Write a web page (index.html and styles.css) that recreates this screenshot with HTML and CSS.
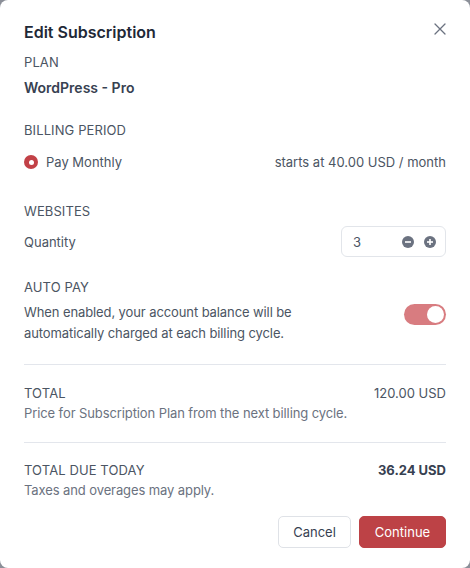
FILE: index.html
```html
<!DOCTYPE html>
<html>
<head>
<meta charset="utf-8">
<link rel="stylesheet" href="styles.css">
</head>
<body>
<div class="modal">
  <div class="header">
    <h1 class="title">Edit Subscription</h1>
    <button class="close" aria-label="Close">
      <svg width="12" height="12" viewBox="0 0 12 12"><path d="M1 1L11 11M11 1L1 11" stroke="#6b7280" stroke-width="1.3" fill="none" stroke-linecap="round"/></svg>
    </button>
  </div>

  <div class="label mt8">PLAN</div>
  <div class="plan">WordPress - Pro</div>

  <div class="label mt22">BILLING PERIOD</div>
  <div class="row mt12">
    <div class="radio-wrap"><span class="radio"></span><span class="text">Pay Monthly</span></div>
    <span class="text">starts at 40.00 USD / month</span>
  </div>

  <div class="label mt29">WEBSITES</div>
  <div class="row mt5">
    <span class="text">Quantity</span>
    <div class="qty">
      <span class="qty-val">3</span>
      <span class="qty-btns">
        <svg width="12" height="12" viewBox="0 0 12 12"><circle cx="6" cy="6" r="6" fill="#6b7280"/><rect x="3" y="5.2" width="6" height="1.6" fill="#fff"/></svg>
        <svg width="12" height="12" viewBox="0 0 12 12"><circle cx="6" cy="6" r="6" fill="#6b7280"/><rect x="3" y="5.2" width="6" height="1.6" fill="#fff"/><rect x="5.2" y="3" width="1.6" height="6" fill="#fff"/></svg>
      </span>
    </div>
  </div>

  <div class="label mt20">AUTO PAY</div>
  <div class="row top mt5">
    <p class="desc-dark">When enabled, your account balance will be automatically charged at each billing cycle.</p>
    <span class="toggle"><span class="knob"></span></span>
  </div>

  <hr class="divider">

  <div class="row">
    <span class="label">TOTAL</span>
    <span class="text">120.00 USD</span>
  </div>
  <div class="sub">Price for Subscription Plan from the next billing cycle.</div>

  <hr class="divider second">

  <div class="row">
    <span class="label">TOTAL DUE TODAY</span>
    <span class="text bold">36.24 USD</span>
  </div>
  <div class="sub">Taxes and overages may apply.</div>

  <div class="actions">
    <button class="btn cancel">Cancel</button>
    <button class="btn primary">Continue</button>
  </div>
</div>
</body>
</html>
```
FILE: styles.css
```css
* { box-sizing: border-box; }
html, body { margin: 0; padding: 0; }
body {
  background: #8b8f98;
  font-family: Inter, "Noto Sans", sans-serif;
  width: 470px;
  height: 568px;
  overflow: hidden;
}
.modal {
  background: #fff;
  width: 470px;
  height: 568px;
  border-radius: 8px;
  padding: 20px 24px 0 24px;
  display: flex;
  flex-direction: column;
}
.header {
  display: flex;
  justify-content: space-between;
  align-items: flex-start;
}
.title {
  margin: 0;
  font-size: 16px;
  line-height: 24px;
  font-weight: 600;
  color: #1f2937;
}
.close {
  background: none;
  border: 0;
  padding: 0;
  margin: 3px 0 0 0;
  width: 12px;
  height: 12px;
  display: flex;
}
.label {
  font-size: 13px;
  line-height: 20px;
  color: #4b5563;
  letter-spacing: 0.1px;
}
.mt5 { margin-top: 5px; }
.mt8 { margin-top: 8px; }
.mt12 { margin-top: 12px; }
.mt20 { margin-top: 20px; }
.mt22 { margin-top: 22px; }
.mt29 { margin-top: 29px; }
.plan {
  margin-top: 6px;
  font-size: 14px;
  line-height: 20px;
  font-weight: 600;
  color: #374151;
}
.row {
  display: flex;
  justify-content: space-between;
  align-items: center;
}
.row.top { align-items: flex-start; }
.text {
  font-size: 13px;
  line-height: 20px;
  color: #4b5563;
}
.bold { font-weight: 700; color: #374151; }
.radio-wrap {
  display: flex;
  align-items: center;
  gap: 8px;
}
.radio {
  width: 14px;
  height: 14px;
  border-radius: 50%;
  background: #c24147;
  position: relative;
}
.radio::after {
  content: "";
  position: absolute;
  left: 4.5px;
  top: 4.5px;
  width: 5px;
  height: 5px;
  border-radius: 50%;
  background: #fff;
}
.qty {
  width: 105px;
  height: 31px;
  border: 1px solid #e2e5ea;
  border-radius: 6px;
  display: flex;
  align-items: center;
  justify-content: space-between;
  padding: 0 9px 0 11px;
}
.qty-val {
  font-size: 13px;
  color: #4b5563;
}
.qty-btns {
  display: flex;
  gap: 10px;
}
.qty-btns svg { display: block; }
.desc-dark {
  margin: 0;
  width: 285px;
  font-size: 13px;
  line-height: 21px;
  color: #4b5563;
  letter-spacing: -0.1px;
}
.toggle {
  width: 42px;
  height: 21px;
  border-radius: 11px;
  background: #d87c80;
  margin-top: 2px;
  position: relative;
  display: block;
}
.knob {
  position: absolute;
  right: 2px;
  top: 2px;
  width: 17px;
  height: 17px;
  border-radius: 50%;
  background: #fff;
}
.divider {
  border: 0;
  border-top: 1px solid #e3e6ec;
  margin: 20px 0 18px 0;
  height: 0;
}
.divider.second {
  margin: 19px 0 17px 0;
}
.sub {
  font-size: 13px;
  line-height: 20px;
  color: #6b7280;
  letter-spacing: -0.1px;
}
.actions {
  display: flex;
  justify-content: flex-end;
  gap: 8px;
  margin-top: 16px;
}
.btn {
  font-family: Inter, "Noto Sans", sans-serif;
  font-size: 13px;
  height: 32px;
  border-radius: 5px;
  padding: 0;
  cursor: pointer;
}
.cancel {
  width: 73px;
  background: #fff;
  border: 1px solid #dfe2e7;
  color: #374151;
}
.primary {
  width: 87px;
  background: #bd4246;
  border: 1px solid #bd4246;
  color: #fff;
}
```
